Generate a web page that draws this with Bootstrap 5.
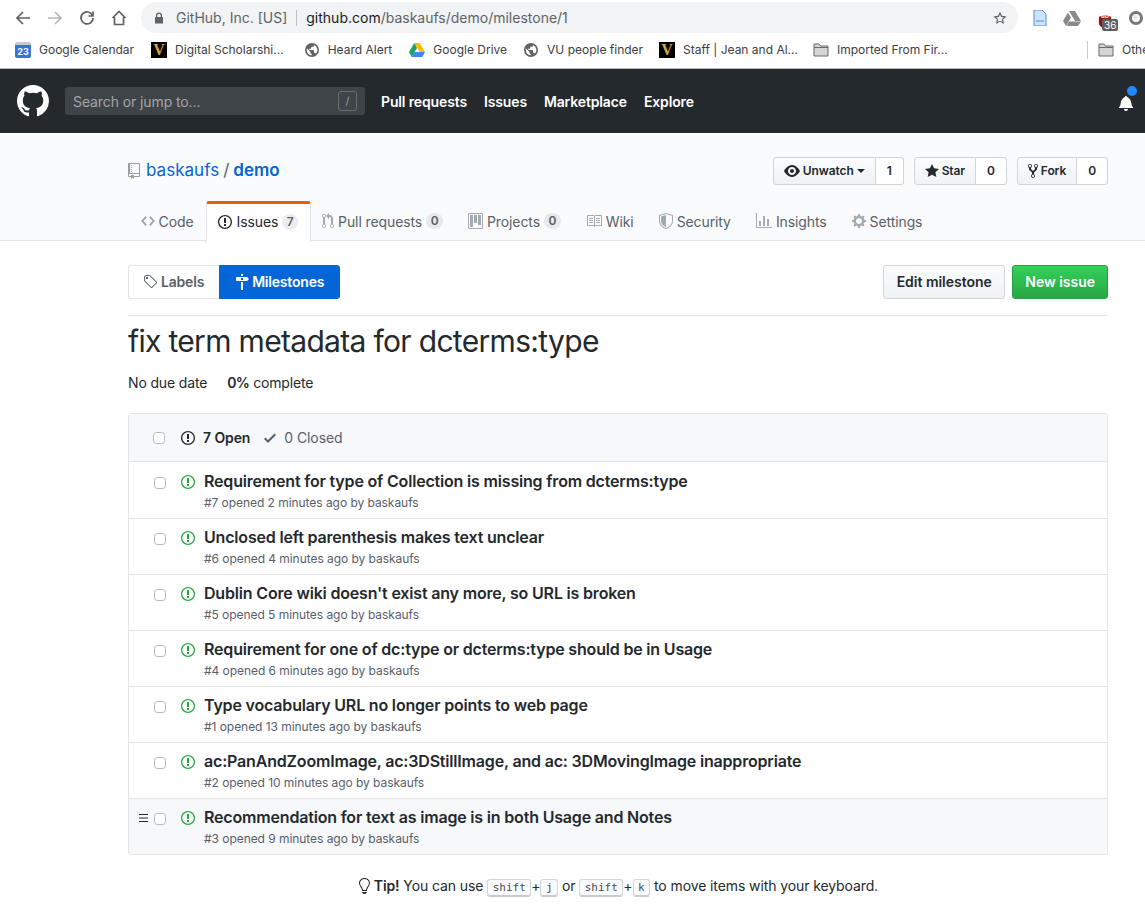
<!DOCTYPE html>
<html lang="en">
<head>
    <meta charset="UTF-8">
    <meta name="viewport" content="width=device-width, initial-scale=1.0">
    <title>fix term metadata for dcterms:type</title>
    <link href="https://cdn.jsdelivr.net/npm/bootstrap@5.3.0/dist/css/bootstrap.min.css" rel="stylesheet">
    <style>
        body { font-family: Inter, "Liberation Sans", sans-serif; font-size: 14px; color: #24292e; background: #fff; overflow: hidden; letter-spacing: -.1px; }
        svg { fill: currentColor; fill-rule: evenodd; flex: none; }
        a { text-decoration: none; }

        /* browser chrome */
        .chrome-top { height: 35px; padding-top: 2px; }
        .chrome-nav { height: 31px; margin-left: 7px; }
        .chrome-btn { width: 32px; display: flex; justify-content: center; color: #5f6368; }
        .chrome-btn svg { fill: none; stroke: currentColor; stroke-width: 1.7; }
        .chrome-btn.dim { color: #b5b7ba; }
        .omnibox { width: 877px; height: 31px; margin-left: 6px; padding: 0 10px 0 13px; background: #f1f3f4; border-radius: 16px; font-size: 14px; color: #5f6368; letter-spacing: 0; }
        .omni-sep { width: 1px; height: 16px; background: #bdc1c6; margin: 0 9px; }
        .url-host { color: #202124; }
        .ext-row { height: 31px; gap: 15px; margin-left: 14px; }
        .ext-ico { position: relative; width: 16px; height: 16px; margin-left: 2px; }
        .ext-shield-text { position: absolute; left: 3px; top: 2px; color: #fff; font-size: 6px; line-height: 8px; font-weight: 700; letter-spacing: 0; }
        .ext-count { position: absolute; left: 4px; top: 9px; background: #5f5f5f; color: #fff; font-size: 10px; line-height: 12px; padding: 0 2px; border-radius: 2px; letter-spacing: 0; }
        .bookmarks { height: 34px; padding-bottom: 3px; padding-left: 15px; font-size: 12px; color: #3c4043; border-bottom: 1px solid #b8babd; white-space: nowrap; overflow: hidden; letter-spacing: 0; }
        .bm { gap: 8px; margin-right: 17px; }
        .bm:nth-child(2) { margin-right: 20px; }
        .bm:nth-child(4), .bm:nth-child(5) { margin-right: 16px; }
        .bm:nth-child(6) { margin-right: 15px; }
        .bm-v { width: 16px; height: 16px; background: #000; color: #d9a53f; font: bold 16px/16px "Liberation Serif", serif; text-align: center; overflow: hidden; }
        .bm-cal { width: 16px; height: 16px; background: #3a72d8; color: #fff; font-size: 9px; line-height: 13px; text-align: center; border-top: 3px solid #c3c9d6; border-radius: 2px; font-weight: 700; letter-spacing: 0; }
        .bm-sep { width: 1px; height: 18px; background: #ccc; margin-left: auto; margin-right: 10px; }
        .bm-other { width: 47px; margin-right: 0; overflow: hidden; }

        /* github header */
        .gh-header { height: 64px; background: #24292e; padding: 0 12px 0 17px; }
        .gh-logo { color: #fff; margin-right: 16px; }
        .gh-search { width: 300px; height: 28px; background: #3f4448; border-radius: 3px; padding: 0 8px; color: #a2a5a8; margin-right: 16px; font-size: 14px; }
        .slash-key { width: 19px; height: 20px; border: 1px solid #6a6e72; border-radius: 3px; font-size: 11px; line-height: 18px; text-align: center; color: #959da5; }
        .gh-link { color: #fff; font-weight: 600; margin-right: 17px; font-size: 14px; letter-spacing: -.14px; }
        .gh-link:hover { color: #fff; }
        .bell-wrap { position: relative; margin-right: 0; margin-top: 4px; color: #fff; }
        .bell-dot { position: absolute; left: 8px; top: -9px; width: 10px; height: 10px; border-radius: 50%; background: #2188ff; }

        /* repo head */
        .repo-head { background: #fafbfc; border-bottom: 1px solid #e1e4e8; height: 108px; }
        .wrap { width: 980px; margin-left: 128px; }
        .repo-title-row { height: 68px; padding-top: 24px; }
        .repo-name { font-size: 17px; color: #586069; letter-spacing: .03px; height: 28px; }
        .repo-name a { color: #0366d6; }
        .repo-ico { color: #959da5; margin-right: 6px; }
        .action-group { margin-left: 10px; }
        .act-btn { font-size: 12px; font-weight: 600; color: #24292e; height: 28px; padding: 0 10px; gap: 3px; background: linear-gradient(#fafbfc, #eff3f6); border: 1px solid #d2d4d7; border-radius: 3px 0 0 3px; display: flex; align-items: center; letter-spacing: -.1px; }
        .act-count { font-size: 12px; font-weight: 600; height: 28px; line-height: 26px; padding: 0 11px; background: #fff; border: 1px solid #d2d4d7; border-left: 0; border-radius: 0 3px 3px 0; }
        .caret-down { border-top: 4px solid #24292e; border-left: 4px solid transparent; border-right: 4px solid transparent; }
        .repo-tabs { border: 0; flex-wrap: nowrap; height: 40px; }
        .repo-tab { color: #586069; height: 40px; padding: 0 12.5px; gap: 4px; display: flex; align-items: center; }
        .repo-tab svg { color: #a3aab1; }
        .repo-tab.on { color: #24292e; background: #fff; height: 41px; border: 1px solid #e1e4e8; border-top: 3px solid #e36209; border-bottom: 0; border-radius: 3px 3px 0 0; padding: 0 11.5px 3px; margin: 0 -1px 0 0; }
        .repo-tab.on svg { color: #24292e; }
        .tab-num { font-size: 12px; font-weight: 600; line-height: 1; padding: 2px 4.5px; background: rgba(27,31,35,.08); border-radius: 20px; color: #586069; }

        /* subnav */
        .subnav-row { height: 34px; margin-top: 24px; }
        .subnav-btn { font-weight: 600; color: #586069; height: 34px; padding: 0 14px 1px; gap: 3px; border: 1px solid #e1e4e8; display: flex; align-items: center; letter-spacing: -.2px; }
        .subnav-left { border-right: 0; border-radius: 3px 0 0 3px; padding-left: 14px; padding-right: 15px; }
        .subnav-active { background: #0366d6; border-color: #0366d6; color: #fff; border-radius: 0 3px 3px 0; padding-left: 15px; padding-right: 15px; }
        .subnav-active:hover { color: #fff; }
        .gh-btn { font-size: 14px; font-weight: 600; height: 34px; padding: 0 12.5px 1px; border-radius: 3px; display: flex; align-items: center; letter-spacing: -.02px; }
        .gh-btn-plain { color: #24292e; background: linear-gradient(#fafbfc, #eff3f6); border: 1px solid #d2d4d7; }
        .gh-btn-green { color: #fff; background: linear-gradient(#34d058, #28a745); border: 1px solid #279f43; margin-left: 7px; padding: 0 12px 1px; }
        .gh-btn-green:hover { color: #fff; }

        /* milestone */
        .ms-head { border-top: 1px solid #e1e4e8; margin-top: 16px; padding-top: 5px; }
        .ms-title { font-size: 30px; font-weight: 400; line-height: 40px; margin: 0; letter-spacing: -.68px; }
        .ms-meta { margin-top: 12px; height: 20px; line-height: 20px; letter-spacing: -.15px; }
        .ms-meta strong { font-weight: 600; margin-left: 20px; letter-spacing: -.6px; }

        /* issue list */
        .issue-box { margin-top: 20px; border: 1px solid #e1e4e8; border-radius: 3px; }
        .issue-box-head { height: 48px; background: #f6f8fa; border-bottom: 1px solid #e1e4e8; padding-left: 24px; }
        .issue-check { width: 12px; height: 12px; margin: 0; border-color: #b4b8bc; border-radius: 2px; flex: none; }
        .state-open { font-weight: 600; margin-left: 16px; gap: 8px; }
        .state-closed { color: #586069; margin-left: 14px; gap: 8px; }
        .issue-row { height: 56px; border: 0; border-bottom: 1px solid #e1e4e8; border-radius: 0 !important; padding: 0 0 0 25px; position: relative; }
        .issue-row:first-child { height: 57px; padding-top: 1px; }
        .issue-row:last-child { border-bottom: 0; height: 55px; background: #f6f8fa; }
        .issue-row .issue-check { margin-top: 14px; }
        .issue-ico { color: #28a745; margin: 11px 9px 0 15px; }
        .issue-title { display: block; margin-top: 7px; font-size: 16px; font-weight: 600; line-height: 22px; color: #24292e; letter-spacing: -.18px; }
        .issue-meta { font-size: 12px; line-height: 18px; margin-top: 2px; color: #586069; letter-spacing: -.05px; }
        .drag-handle { position: absolute; left: 10px; top: 15px; color: #24292e; }

        /* tip */
        .key-tip { margin-top: 21px; line-height: 20px; text-align: center; letter-spacing: -.1px; }
        .key-tip svg { vertical-align: text-bottom; }
        .key-tip strong { font-weight: 600; }
        .key-tip kbd { font: 11px/10px "DejaVu Sans Mono", "Liberation Mono", monospace; color: #444d56; background: #fafbfc; border: 1px solid #d1d5da; border-bottom-color: #c6cbd1; box-shadow: inset 0 -1px 0 #c6cbd1; border-radius: 3px; padding: 3px 4.5px; letter-spacing: 0; display: inline-block; }
    </style>
</head>
<body>
    <svg width="0" height="0" class="position-absolute">
        <symbol id="i-github" viewBox="0 0 16 16"><path d="M8 0C3.58 0 0 3.58 0 8c0 3.54 2.29 6.53 5.47 7.59.4.07.55-.17.55-.38 0-.19-.01-.82-.01-1.49-2.01.37-2.53-.49-2.69-.94-.09-.23-.48-.94-.82-1.13-.28-.15-.68-.52-.01-.53.63-.01 1.08.58 1.23.82.72 1.21 1.87.87 2.33.66.07-.52.28-.87.51-1.07-1.78-.2-3.64-.89-3.64-3.95 0-.87.31-1.59.82-2.15-.08-.2-.36-1.02.08-2.12 0 0 .67-.21 2.2.82.64-.18 1.32-.27 2-.27.68 0 1.36.09 2 .27 1.53-1.04 2.2-.82 2.2-.82.44 1.1.16 1.92.08 2.12.51.56.82 1.27.82 2.15 0 3.07-1.87 3.75-3.65 3.95.29.25.54.73.54 1.48 0 1.07-.01 1.93-.01 2.2 0 .21.15.46.55.38A8.013 8.013 0 0016 8c0-4.42-3.58-8-8-8z"/></symbol>
        <symbol id="i-issue" viewBox="0 0 14 16"><path d="M7 2.3c3.14 0 5.7 2.56 5.7 5.7s-2.56 5.7-5.7 5.7A5.71 5.71 0 011.3 8c0-3.14 2.56-5.7 5.7-5.7zM7 1C3.14 1 0 4.14 0 8s3.14 7 7 7 7-3.14 7-7-3.14-7-7-7zm1 3H6v5h2V4zm0 6H6v2h2v-2z"/></symbol>
        <symbol id="i-repo" viewBox="0 0 12 16"><path d="M4 9H3V8h1v1zm0-3H3v1h1V6zm0-2H3v1h1V4zm0-2H3v1h1V2zm8-1v12c0 .55-.45 1-1 1H6v2l-1.5-1.5L3 16v-2H1c-.55 0-1-.45-1-1V1c0-.55.45-1 1-1h10c.55 0 1 .45 1 1zm-1 10H1v2h2v-1h3v1h5v-2zm0-10H2v9h9V1z"/></symbol>
        <symbol id="i-code" viewBox="0 0 14 16"><path d="M9.5 3L8 4.5 11.5 8 8 11.5 9.5 13 14 8 9.5 3zm-5 0L0 8l4.5 5L6 11.5 2.5 8 6 4.5 4.5 3z"/></symbol>
        <symbol id="i-pr" viewBox="0 0 12 16"><path d="M11 11.28V5c-.03-.78-.34-1.47-.94-2.06C9.46 2.35 8.78 2.03 8 2H7V0L4 3l3 3V4h1c.27.02.48.11.69.31.21.2.3.42.31.69v6.28A1.993 1.993 0 0010 15a1.993 1.993 0 001-3.72zm-1 2.92c-.66 0-1.2-.55-1.2-1.2 0-.65.55-1.2 1.2-1.2.65 0 1.2.55 1.2 1.2 0 .65-.55 1.2-1.2 1.2zM4 3c0-1.11-.89-2-2-2a1.993 1.993 0 00-1 3.72v6.56A1.993 1.993 0 002 15a1.993 1.993 0 001-3.72V4.72c.59-.34 1-.98 1-1.72zm-.8 10c0 .66-.55 1.2-1.2 1.2-.65 0-1.2-.55-1.2-1.2 0-.65.55-1.2 1.2-1.2.65 0 1.2.55 1.2 1.2zM2 4.2C1.34 4.2.8 3.65.8 3c0-.65.55-1.2 1.2-1.2.65 0 1.2.55 1.2 1.2 0 .65-.55 1.2-1.2 1.2z"/></symbol>
        <symbol id="i-project" viewBox="0 0 15 16"><path d="M10 12h3V2h-3v10zm-4-2h3V2H6v8zm-4 4h3V2H2v12zm-1 1h13V1H1v14zM14 0H1a1 1 0 00-1 1v14a1 1 0 001 1h13a1 1 0 001-1V1a1 1 0 00-1-1z"/></symbol>
        <symbol id="i-book" viewBox="0 0 16 16"><path d="M3 5h4v1H3V5zm0 3h4V7H3v1zm0 2h4V9H3v1zm11-5h-4v1h4V5zm0 2h-4v1h4V7zm0 2h-4v1h4V9zm2-6v9c0 .55-.45 1-1 1H9.5l-1 1-1-1H2c-.55 0-1-.45-1-1V3c0-.55.45-1 1-1h5.5l1 1 1-1H15c.55 0 1 .45 1 1zm-8 .5L7.5 3H2v9h6V3.5zm7-.5H9.5l-.5.5V12h6V3z"/></symbol>
        <symbol id="i-shield" viewBox="0 0 14 16"><path d="M0 2l7-2 7 2v6.02C14 12.69 8.69 16 7 16c-1.69 0-7-3.31-7-7.98V2zm1 .75L7 1l6 1.75v5.268C13 12.104 8.449 15 7 15c-1.449 0-6-2.896-6-6.982V2.75zm1 .75L7 2v12c-1.207 0-5-2.482-5-5.985V3.5z"/></symbol>
        <symbol id="i-graph" viewBox="0 0 16 16"><path d="M16 14v1H0V0h1v14h15zM5 13H3V8h2v5zm4 0H7V3h2v10zm4 0h-2V6h2v7z"/></symbol>
        <symbol id="i-gear" viewBox="0 0 14 16"><path d="M14 8.77v-1.6l-1.94-.64-.45-1.09.88-1.84-1.13-1.13-1.81.91-1.09-.45-.69-1.92h-1.6l-.63 1.94-1.11.45-1.84-.88-1.13 1.13.91 1.81-.45 1.09L0 7.23v1.59l1.94.64.45 1.09-.88 1.84 1.13 1.13 1.81-.91 1.09.45.69 1.92h1.59l.63-1.94 1.11-.45 1.84.88 1.13-1.13-.92-1.81.47-1.09L14 8.75v.02zM7 11c-1.66 0-3-1.34-3-3s1.34-3 3-3 3 1.34 3 3-1.34 3-3 3z"/></symbol>
        <symbol id="i-tag" viewBox="0 0 15 16"><path d="M7.73 1.73C7.26 1.26 6.62 1 5.96 1H3.5C2.13 1 1 2.13 1 3.5v2.47c0 .66.27 1.3.73 1.77l6.06 6.06c.39.39 1.02.39 1.41 0l4.59-4.59a.996.996 0 000-1.41L7.73 1.73zM2.38 7.09c-.31-.3-.47-.7-.47-1.13V3.5c0-.88.72-1.59 1.59-1.59h2.47c.42 0 .83.16 1.13.47l6.14 6.13-4.73 4.73-6.13-6.15zM3.01 3h2v2H3V3h.01z"/></symbol>
        <symbol id="i-milestone" viewBox="0 0 14 16"><path d="M8 2H6V0h2v2zm4 5H2c-.55 0-1-.45-1-1V4c0-.55.45-1 1-1h10l2 2-2 2zM8 4H6v2h2V4zM6 16h2V8H6v8z"/></symbol>
        <symbol id="i-eye" viewBox="0 0 16 16"><path d="M8.06 2C3 2 0 8 0 8s3 6 8.06 6C13 14 16 8 16 8s-3-6-7.94-6zM8 12c-2.2 0-4-1.78-4-4 0-2.2 1.8-4 4-4 2.22 0 4 1.8 4 4 0 2.22-1.78 4-4 4zm2-4c0 1.11-.89 2-2 2-1.11 0-2-.89-2-2 0-1.11.89-2 2-2 1.11 0 2 .89 2 2z"/></symbol>
        <symbol id="i-star" viewBox="0 0 14 16"><path d="M14 6l-4.9-.64L7 1 4.9 5.36 0 6l3.6 3.26L2.67 14 7 11.67 11.33 14l-.93-4.74L14 6z"/></symbol>
        <symbol id="i-fork" viewBox="0 0 10 16"><path d="M8 1a1.993 1.993 0 00-1 3.72V6L5 8 3 6V4.72A1.993 1.993 0 002 1a1.993 1.993 0 00-1 3.72V6.5l3 3v1.78A1.993 1.993 0 005 15a1.993 1.993 0 001-3.72V9.5l3-3V4.72A1.993 1.993 0 008 1zM2 4.2C1.34 4.2.8 3.65.8 3c0-.65.55-1.2 1.2-1.2.65 0 1.2.55 1.2 1.2 0 .65-.55 1.2-1.2 1.2zm3 10c-.66 0-1.2-.55-1.2-1.2 0-.65.55-1.2 1.2-1.2.65 0 1.2.55 1.2 1.2 0 .65-.55 1.2-1.2 1.2zm3-10c-.66 0-1.2-.55-1.2-1.2 0-.65.55-1.2 1.2-1.2.65 0 1.2.55 1.2 1.2 0 .65-.55 1.2-1.2 1.2z"/></symbol>
        <symbol id="i-check" viewBox="0 0 12 16"><path d="M12 5l-8 8-4-4 1.5-1.5L4 10l6.5-6.5L12 5z"/></symbol>
        <symbol id="i-bell" viewBox="0 0 14 16"><path d="M14 12v1H0v-1l.73-.58c.77-.77.81-2.55 1.19-4.42C2.69 3.23 6 2 6 2c0-.55.45-1 1-1s1 .45 1 1c0 0 3.39 1.23 4.16 5 .38 1.88.42 3.66 1.19 4.42l.66.58H14zm-7 4c1.11 0 2-.89 2-2H5c0 1.11.89 2 2 2z"/></symbol>
        <symbol id="i-bulb" viewBox="0 0 12 16"><path d="M6.5 0C3.48 0 1 2.19 1 5c0 .92.55 2.25 1 3 1.34 2.25 1.78 2.78 2 4v1h5v-1c.22-1.22.66-1.75 2-4 .45-.75 1-2.08 1-3 0-2.81-2.48-5-5.5-5zm3.64 7.48c-.25.44-.47.8-.67 1.11-.86 1.41-1.25 2.06-1.45 3.23-.02.05-.02.11-.02.17H5c0-.06 0-.13-.02-.17-.2-1.17-.59-1.83-1.45-3.23-.2-.31-.42-.67-.67-1.11C2.44 6.78 2 5.65 2 5c0-2.2 2.02-4 4.5-4 1.22 0 2.36.42 3.22 1.19C10.55 2.94 11 3.94 11 5c0 .66-.44 1.78-.86 2.48zM4 14h5c-.23 1.14-1.3 2-2.5 2s-2.27-.86-2.5-2z"/></symbol>
        <symbol id="i-globe" viewBox="0 0 16 16"><path d="M8 1a7 7 0 100 14A7 7 0 008 1zM2.7 8c0-.6.1-1.1.3-1.6L6.5 10v.8c0 .7.6 1.3 1.3 1.3v1.2A5.3 5.3 0 012.7 8zm9.200 3.700c-.2-.5-.7-.9-1.200-.9H10V8.700c0-.4-.3-.7-.7-.7H5.300V6.700h1.300c.4 0 .7-.3.7-.7V4.700h1.400c.7 0 1.300-.6 1.300-1.300v-.3a5.300 5.300 0 011.900 8.600z"/></symbol>
        <symbol id="i-folder" viewBox="0 0 16 14"><path d="M1 1h5l1.500 2H15v10H1z" fill="#d5d5d5" stroke="#6b6b6b"/><path d="M1 4.500h14" stroke="#6b6b6b"/></symbol>
    </svg>

    <div class="chrome-top d-flex align-items-start">
        <div class="chrome-nav d-flex align-items-center">
            <a class="chrome-btn" href="#"><svg width="16" height="16" viewBox="0 0 16 16"><path d="M15 8H2M8 2 2 8l6 6"/></svg></a>
            <a class="chrome-btn dim" href="#"><svg width="16" height="16" viewBox="0 0 16 16"><path d="M1 8h13M8 2l6 6-6 6"/></svg></a>
            <a class="chrome-btn" href="#"><svg width="16" height="16" viewBox="0 0 16 16"><path d="M13.500 5.500A6 6 0 1 0 14 8M14 1.500v4.500H9.500"/></svg></a>
            <a class="chrome-btn" href="#"><svg width="16" height="16" viewBox="0 0 16 16"><path d="M1.500 8 8 1.500 14.500 8M3.500 7v7.500h9V7"/></svg></a>
        </div>
        <div class="omnibox d-flex align-items-center">
            <svg width="10" height="12" viewBox="0 0 10 12" class="me-2"><path d="M2 5V3.500a3 3 0 0 1 6 0V5h1v6.500H1V5zm1.300 0h3.400V3.500a1.700 1.700 0 0 0-3.400 0z"/></svg>
            <span class="ms-1">GitHub, Inc. [US]</span>
            <span class="omni-sep"></span>
            <span><span class="url-host">github.com</span>/baskaufs/demo/milestone/1</span>
            <svg width="16" height="16" viewBox="0 0 24 24" class="ms-auto"><path d="M12 2.500l2.900 6.300 6.900.8-5.100 4.700 1.400 6.800-6.100-3.400-6.100 3.400 1.400-6.800-5.100-4.700 6.900-.8zm0 4.300-1.700 3.800-4.100.5 3 2.800-.8 4.100 3.600-2 3.600 2-.8-4.100 3-2.800-4.100-.5z"/></svg>
        </div>
        <div class="ext-row d-flex align-items-center">
            <svg width="16" height="16" viewBox="0 0 16 16"><path d="M2 0h8l4 4v12H2z" fill="#cfe2fb" stroke="#4a90e2"/><path d="M4 11h8" stroke="#4a90e2"/></svg>
            <svg width="18" height="16" viewBox="0 0 18 16"><path d="M6 1h6l6 10h-6zM5 2.500 0 11l3 5 5-8.500zM6 11.500 3.500 16h11.500l3-4.500z" fill="#8a8a8a"/></svg>
            <span class="ext-ico"><svg width="14" height="16" viewBox="0 0 16 16"><path d="M1 2l7-2 7 2v7c0 3-4 6-7 7-3-1-7-4-7-7z" fill="#8e1519"/></svg><span class="ext-shield-text">uD</span><span class="ext-count">36</span></span>
            <svg width="14" height="14" viewBox="0 0 14 14"><circle cx="7" cy="7" r="5.500" fill="#fff" stroke="#777" stroke-width="3"/><circle cx="6" cy="6" r="2.500" fill="#e8e8e8"/></svg>
        </div>
    </div>

    <div class="bookmarks d-flex align-items-center">
        <a class="bm d-flex align-items-center text-reset" href="#"><span class="bm-cal">23</span>Google Calendar</a>
        <a class="bm d-flex align-items-center text-reset" href="#"><span class="bm-v">V</span>Digital Scholarshi...</a>
        <a class="bm d-flex align-items-center text-reset" href="#"><svg width="16" height="16" style="color:#5f6368"><use href="#i-globe"/></svg>Heard Alert</a>
        <a class="bm d-flex align-items-center text-reset" href="#"><svg width="16" height="14" viewBox="0 0 16 14"><path d="M5.300 0h5.400l5.300 9h-5.300z" fill="#fbbc04"/><path d="M5.300 0 0 9l2.700 5L8 5z" fill="#1ea362"/><path d="M5.400 9 2.700 14h10.600L16 9z" fill="#4285f4"/></svg>Google Drive</a>
        <a class="bm d-flex align-items-center text-reset" href="#"><svg width="16" height="16" style="color:#5f6368"><use href="#i-globe"/></svg>VU people finder</a>
        <a class="bm d-flex align-items-center text-reset" href="#"><span class="bm-v">V</span>Staff | Jean and Al...</a>
        <a class="bm d-flex align-items-center text-reset" href="#"><svg width="16" height="14"><use href="#i-folder"/></svg>Imported From Fir...</a>
        <span class="bm-sep"></span>
        <a class="bm bm-other d-flex align-items-center text-reset" href="#"><svg width="16" height="14"><use href="#i-folder"/></svg>Other</a>
    </div>

    <nav class="navbar gh-header flex-nowrap justify-content-start">
        <a class="gh-logo d-flex" href="#"><svg width="32" height="32"><use href="#i-github"/></svg></a>
        <div class="gh-search d-flex align-items-center justify-content-between">
            <span>Search or jump to...</span>
            <span class="slash-key">/</span>
        </div>
        <a class="gh-link" href="#">Pull requests</a>
        <a class="gh-link" href="#">Issues</a>
        <a class="gh-link" href="#">Marketplace</a>
        <a class="gh-link" href="#">Explore</a>
        <div class="bell-wrap ms-auto d-flex"><svg width="14" height="16"><use href="#i-bell"/></svg><span class="bell-dot"></span></div>
    </nav>

    <div class="repo-head">
        <div class="wrap">
            <div class="repo-title-row d-flex align-items-start justify-content-between">
                <div class="repo-name d-flex align-items-center">
                    <svg class="repo-ico" width="12" height="16"><use href="#i-repo"/></svg>
                    <a href="#">baskaufs</a><span class="mx-1">/</span><a href="#" class="fw-semibold">demo</a>
                </div>
                <div class="d-flex">
                    <div class="action-group d-flex"><a class="act-btn" href="#"><svg width="16" height="16"><use href="#i-eye"/></svg>Unwatch<span class="caret-down"></span></a><a class="act-count text-reset" href="#">1</a></div>
                    <div class="action-group d-flex"><a class="act-btn" href="#"><svg width="14" height="16"><use href="#i-star"/></svg>Star</a><a class="act-count text-reset" href="#">0</a></div>
                    <div class="action-group d-flex"><a class="act-btn" href="#"><svg width="10" height="16"><use href="#i-fork"/></svg>Fork</a><a class="act-count text-reset" href="#">0</a></div>
                </div>
            </div>
            <ul class="nav nav-tabs repo-tabs">
                <li class="nav-item"><a class="repo-tab" href="#"><svg width="14" height="16"><use href="#i-code"/></svg>Code</a></li>
                <li class="nav-item"><a class="repo-tab on" href="#"><svg width="14" height="16"><use href="#i-issue"/></svg>Issues <span class="tab-num">7</span></a></li>
                <li class="nav-item"><a class="repo-tab" href="#"><svg width="12" height="16"><use href="#i-pr"/></svg>Pull requests <span class="tab-num">0</span></a></li>
                <li class="nav-item"><a class="repo-tab" href="#"><svg width="15" height="16"><use href="#i-project"/></svg>Projects <span class="tab-num">0</span></a></li>
                <li class="nav-item"><a class="repo-tab" href="#"><svg width="16" height="16"><use href="#i-book"/></svg>Wiki</a></li>
                <li class="nav-item"><a class="repo-tab" href="#"><svg width="14" height="16"><use href="#i-shield"/></svg>Security</a></li>
                <li class="nav-item"><a class="repo-tab" href="#"><svg width="16" height="16"><use href="#i-graph"/></svg>Insights</a></li>
                <li class="nav-item"><a class="repo-tab" href="#"><svg width="14" height="16"><use href="#i-gear"/></svg>Settings</a></li>
            </ul>
        </div>
    </div>

    <main class="wrap">
        <div class="subnav-row d-flex justify-content-between">
            <div class="d-flex">
                <a class="subnav-btn subnav-left" href="#"><svg width="15" height="16"><use href="#i-tag"/></svg>Labels</a>
                <a class="subnav-btn subnav-active" href="#"><svg width="14" height="16"><use href="#i-milestone"/></svg>Milestones</a>
            </div>
            <div class="d-flex">
                <a class="gh-btn gh-btn-plain" href="#">Edit milestone</a>
                <a class="gh-btn gh-btn-green" href="#">New issue</a>
            </div>
        </div>

        <div class="ms-head">
            <h1 class="ms-title">fix term metadata for dcterms:type</h1>
            <div class="ms-meta">No due date<strong>0%</strong> complete</div>
        </div>

        <div class="issue-box">
            <div class="issue-box-head d-flex align-items-center">
                <input class="form-check-input issue-check" type="checkbox">
                <span class="state-open d-flex align-items-center"><svg width="14" height="16"><use href="#i-issue"/></svg>7 Open</span>
                <span class="state-closed d-flex align-items-center"><svg width="12" height="16"><use href="#i-check"/></svg>0 Closed</span>
            </div>
            <ul class="list-group" id="issue-list"></ul>
        </div>

        <div class="key-tip">
            <svg width="12" height="16"><use href="#i-bulb"/></svg> <strong>Tip!</strong> You can use <kbd>shift</kbd>+<kbd>j</kbd> or <kbd>shift</kbd>+<kbd>k</kbd> to move items with your keyboard.
        </div>
    </main>

    <script src="https://cdn.jsdelivr.net/npm/bootstrap@5.3.0/dist/js/bootstrap.bundle.min.js"></script>
    <script>
        const issues = [
            ["Requirement for type of Collection is missing from dcterms:type", 7, "2 minutes"],
            ["Unclosed left parenthesis makes text unclear", 6, "4 minutes"],
            ["Dublin Core wiki doesn't exist any more, so URL is broken", 5, "5 minutes"],
            ["Requirement for one of dc:type or dcterms:type should be in Usage", 4, "6 minutes"],
            ["Type vocabulary URL no longer points to web page", 1, "13 minutes"],
            ["ac:PanAndZoomImage, ac:3DStillImage, and ac: 3DMovingImage inappropriate", 2, "10 minutes"],
            ["Recommendation for text as image is in both Usage and Notes", 3, "9 minutes"]
        ];
        const list = document.getElementById("issue-list");
        issues.forEach(function (it, i) {
            let handle = i === issues.length - 1
                ? '<svg class="drag-handle" width="9" height="8" viewBox="0 0 9 8"><path d="M0 0h9v1H0zM0 3.500h9v1H0zM0 7h9v1H0z"/></svg>' : "";
            list.insertAdjacentHTML("beforeend",
                '<li class="list-group-item issue-row d-flex align-items-start">' + handle +
                '<input class="form-check-input issue-check" type="checkbox">' +
                '<svg class="issue-ico" width="14" height="16"><use href="#i-issue"/></svg>' +
                '<div><a class="issue-title" href="#">' + it[0] + '</a>' +
                '<div class="issue-meta">#' + it[1] + ' opened ' + it[2] + ' ago by baskaufs</div></div></li>');
        });
    </script>
</body>
</html>
